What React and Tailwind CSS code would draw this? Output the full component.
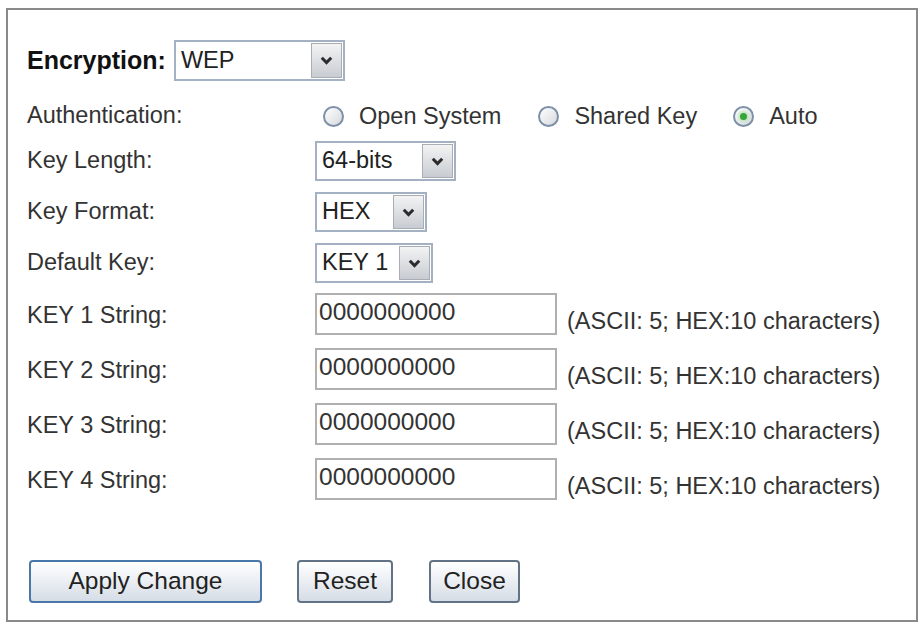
import React from 'react';

const Chevron = () => (
  <svg width="13" height="9" viewBox="0 0 13 9">
    <polyline points="1.8,1.8 6.5,6.6 11.2,1.8" fill="none" stroke="#2b2b2b" strokeWidth="3" />
  </svg>
);

const FakeSelect = ({ value, className }) => (
  <div className={`flex items-stretch border-2 border-[#a4b1c2] bg-white ${className}`}>
    <span className="flex-1 flex items-center pl-[5px] text-[23.5px] text-[#222]">{value}</span>
    <span className="m-[1px] w-[31px] flex items-center justify-center border border-[#a9aeb6] bg-gradient-to-b from-[#f3f3f3] to-[#c8ccd2]">
      <Chevron />
    </span>
  </div>
);

const Radio = ({ label, checked }) => (
  <div className="flex items-center">
    <span className="shrink-0 w-[21px] h-[21px] rounded-full border-2 border-[#7d90a7] bg-gradient-to-br from-[#ffffff] to-[#d6d9dd] flex items-center justify-center">
      {checked && <span className="w-[7px] h-[7px] rounded-full bg-[#36a33b] shadow-[0_0_3px_2px_#bfe6bf]" />}
    </span>
    <span className="ml-[15px] whitespace-nowrap text-[23.5px] text-[#333]">{label}</span>
  </div>
);

const Label = ({ children, className = '' }) => (
  <div className={`w-[288px] shrink-0 text-[23.5px] text-[#333] ${className}`}>{children}</div>
);

const KeyRow = ({ label, className }) => (
  <div className={`flex items-center h-[42px] ${className}`}>
    <Label className="pt-[4px]">{label}</Label>
    <input
      readOnly
      value="0000000000"
      className="w-[242px] h-[42px] border-2 border-[#b0b0b0] pl-[2px] pb-[4px] text-[24.5px] text-[#333] outline-none bg-white"
    />
    <span className="ml-[10px] self-end text-[23.5px] text-[#333] leading-[26px] mb-[1px]">
      (ASCII: 5; HEX:10 characters)
    </span>
  </div>
);

const Button = ({ children, className }) => (
  <button className={`h-[43px] rounded-[4px] border-2 bg-gradient-to-b from-[#ffffff] to-[#d6dde6] text-[24.5px] text-[#222] ${className}`}>
    {children}
  </button>
);

export default function App() {
  return (
    <div className="w-[921px] h-[623px] bg-white pt-[8px] pl-[6px] font-['Liberation_Sans',Arial,sans-serif]">
      <div className="w-[912px] h-[614px] border-2 border-[#8a8a8a] pl-[19px]">
        {/* Encryption */}
        <div className="flex items-center mt-[30px] h-[41px]">
          <span className="text-[25px] font-bold text-[#111]">Encryption:</span>
          <FakeSelect value="WEP" className="ml-[8px] w-[171px] h-[41px]" />
        </div>

        {/* Authentication */}
        <div className="flex items-center mt-[19px] h-[30px]">
          <Label className="pt-[2px]">Authentication:</Label>
          <div className="flex items-center pl-[8px] pt-[3px]">
            <Radio label="Open System" />
            <div className="ml-[37px]"><Radio label="Shared Key" /></div>
            <div className="ml-[36px]"><Radio label="Auto" checked /></div>
          </div>
        </div>

        <div className="flex items-center mt-[11px] h-[40px]">
          <Label>Key Length:</Label>
          <FakeSelect value="64-bits" className="w-[141px] h-[40px]" />
        </div>

        <div className="flex items-center mt-[11px] h-[40px]">
          <Label>Key Format:</Label>
          <FakeSelect value="HEX" className="w-[112px] h-[40px]" />
        </div>

        <div className="flex items-center mt-[11px] h-[40px]">
          <Label>Default Key:</Label>
          <FakeSelect value="KEY 1" className="w-[118px] h-[40px]" />
        </div>

        <KeyRow label="KEY 1 String:" className="mt-[10px]" />
        <KeyRow label="KEY 2 String:" className="mt-[13px]" />
        <KeyRow label="KEY 3 String:" className="mt-[13px]" />
        <KeyRow label="KEY 4 String:" className="mt-[13px]" />

        {/* Buttons */}
        <div className="flex items-center mt-[60px] pl-[2px]">
          <Button className="w-[233px] border-[#4a77aa]">Apply Change</Button>
          <Button className="ml-[35px] w-[96px] border-[#627386]">Reset</Button>
          <Button className="ml-[36px] w-[91px] border-[#627386]">Close</Button>
        </div>
      </div>
    </div>
  );
}
